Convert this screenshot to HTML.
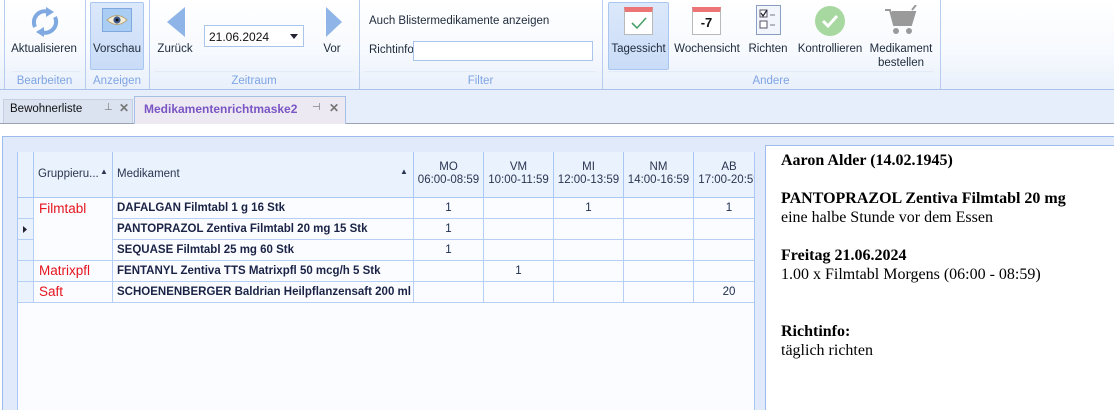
<!DOCTYPE html>
<html><head><meta charset="utf-8"><style>
*{margin:0;padding:0;box-sizing:border-box}
body{width:1114px;height:410px;overflow:hidden;position:relative;font-family:"Liberation Sans",sans-serif;font-size:11.5px;color:#1e2a3a;background:#fff}
.a{position:absolute}
.rib{left:0;top:0;width:1114px;height:90px;background:linear-gradient(#ffffff,#f6f9fe 60%,#e9f0fb);border-bottom:1px solid #a9c3ea}
.sep{top:0;width:1px;height:89px;background:#b8cdee}
.glab{top:75px;color:#7ea4e4;font-size:11.5px;text-align:center}
.gline{top:71px;height:1px;background:#e2ebf8}
.lbl{font-size:11.5px;color:#1e2a3a;text-align:center;white-space:nowrap}
.cell{position:absolute;border-right:1px solid #b5cff5;border-bottom:1px solid #b5cff5;height:22px;white-space:nowrap;overflow:hidden}
.hd{position:absolute;top:152px;height:46px;background:#eaf2fd;border-right:1px solid #a9c8f3;border-bottom:1px solid #a9c8f3;font-size:11.5px;color:#2a3550;white-space:nowrap}
.num{text-align:center;font-size:11.5px;line-height:21px;color:#1a2b4c}
.med{font-weight:bold;font-size:11.5px;line-height:20px;padding-left:4px;color:#1a2346}
.grp{color:#e5141e;font-size:13.5px;padding-left:5px;line-height:22px}
.rt{font-family:"Liberation Serif",serif;font-size:16px;color:#000;left:781px}
</style></head><body>
<div class="a rib"></div>
<div class="a sep" style="left:4px"></div>
<div class="a sep" style="left:85px"></div>
<div class="a sep" style="left:149px"></div>
<div class="a sep" style="left:359px"></div>
<div class="a sep" style="left:602px"></div>
<div class="a sep" style="left:940px"></div>
<div class="a gline" style="left:12px;width:68px"></div>
<div class="a gline" style="left:155px;width:198px"></div>
<div class="a gline" style="left:364px;width:232px"></div>
<div class="a gline" style="left:608px;width:325px"></div>
<svg class="a" style="left:27px;top:5px" width="36" height="34" viewBox="0 0 36 34"><path d="M8 22 A11 11 0 0 1 22 7" fill="none" stroke="#7fa9e0" stroke-width="4"/><path d="M19 2 L27 7 L19 12Z" fill="#7fa9e0"/><path d="M28 12 A11 11 0 0 1 14 27" fill="none" stroke="#7fa9e0" stroke-width="4"/><path d="M17 32 L9 27 L17 22Z" fill="#7fa9e0"/></svg>
<div class="a lbl" style="left:8px;top:43px;width:72px">Aktualisieren</div>
<div class="a glab" style="left:4px;width:81px">Bearbeiten</div>
<div class="a" style="left:90px;top:2px;width:54px;height:68px;background:linear-gradient(#dce8fb,#c9dcf7);border:1px solid #a8c6ef;border-radius:2px"></div>
<div class="a" style="left:102px;top:8px;width:30px;height:24px;background:#a9cdf3;border:1px solid #7fa9dc"></div>
<svg class="a" style="left:105px;top:12px" width="24" height="16" viewBox="0 0 24 16"><path d="M2 8 Q12 -1 22 8 Q12 17 2 8Z" fill="#f4eed9" stroke="#b7a67a"/><circle cx="12" cy="8" r="3.6" fill="#3d5a8a"/><circle cx="12" cy="8" r="1.4" fill="#111"/></svg>
<div class="a lbl" style="left:90px;top:43px;width:54px">Vorschau</div>
<div class="a glab" style="left:85px;width:64px">Anzeigen</div>
<svg class="a" style="left:166px;top:6px" width="20" height="32"><path d="M19 1 L1 16 L19 31Z" fill="#8fb5e8"/></svg>
<div class="a lbl" style="left:156px;top:43px;width:38px">Zurück</div>
<div class="a" style="left:204px;top:25px;width:100px;height:22px;background:#fff;border:1px solid #aac5ec"></div>
<div class="a" style="left:209px;top:30px;font-size:12px;color:#111">21.06.2024</div>
<svg class="a" style="left:290px;top:34px" width="8" height="5"><path d="M0 0H8L4 5Z" fill="#223"/></svg>
<svg class="a" style="left:325px;top:6px" width="18" height="32"><path d="M1 1 L17 16 L1 31Z" fill="#8fb5e8"/></svg>
<div class="a lbl" style="left:320px;top:43px;width:24px">Vor</div>
<div class="a glab" style="left:149px;width:210px">Zeitraum</div>
<div class="a" style="left:369px;top:15px">Auch Blistermedikamente anzeigen</div>
<div class="a" style="left:369px;top:44px">Richtinfo</div>
<div class="a" style="left:413px;top:41px;width:180px;height:20px;background:#fff;border:1px solid #aac5ec"></div>
<div class="a glab" style="left:359px;width:243px">Filter</div>
<div class="a" style="left:608px;top:2px;width:61px;height:68px;background:linear-gradient(#dce8fb,#c9dcf7);border:1px solid #a8c6ef;border-radius:2px"></div>
<div class="a" style="left:624px;top:7px;width:29px;height:28px;background:#fff;border:1px solid #b9b9b9;border-top:5px solid #ec7474"></div>
<svg class="a" style="left:630px;top:16px" width="18" height="14"><path d="M2 7 L7 12 L16 2" fill="none" stroke="#4aa06a" stroke-width="1.6"/></svg>
<div class="a lbl" style="left:608px;top:43px;width:61px">Tagessicht</div>
<div class="a" style="left:692px;top:7px;width:29px;height:28px;background:#fff;border:1px solid #b9b9b9;border-top:5px solid #ec7474;font-weight:bold;font-size:13px;text-align:center;line-height:21px;color:#111">-7</div>
<div class="a lbl" style="left:674px;top:43px;width:66px">Wochensicht</div>
<div class="a" style="left:756px;top:5px;width:25px;height:30px;background:#f2f5fb;border:1px solid #8a9ec2"></div>
<svg class="a" style="left:759px;top:9px" width="20" height="22"><rect x="1" y="1" width="7" height="7" fill="#fff" stroke="#556"/><path d="M2 4 L4 7 L8 1" fill="none" stroke="#223" stroke-width="1.2"/><path d="M11 6H16M11 16H16" stroke="#778"/><rect x="1" y="12" width="7" height="7" fill="#fff" stroke="#556"/></svg>
<div class="a lbl" style="left:748px;top:43px;width:40px">Richten</div>
<svg class="a" style="left:814px;top:5px" width="32" height="32"><circle cx="16" cy="16" r="15" fill="#a7d8a0"/><path d="M9 16 L14 21 L23 11" fill="none" stroke="#fff" stroke-width="3"/></svg>
<div class="a lbl" style="left:797px;top:43px;width:66px">Kontrollieren</div>
<svg class="a" style="left:884px;top:5px" width="34" height="30"><path d="M1 5H6L10 20H27L31 7H8" fill="#9a9a9a" stroke="#9a9a9a" stroke-width="2"/><path d="M28 5L32 0" stroke="#9a9a9a" stroke-width="2"/><circle cx="12" cy="26" r="3" fill="#9a9a9a"/><circle cx="25" cy="26" r="3" fill="#9a9a9a"/></svg>
<div class="a lbl" style="left:866px;top:42px;width:70px;line-height:14px">Medikament<br>bestellen</div>
<div class="a glab" style="left:602px;width:338px">Andere</div>
<div class="a" style="left:0;top:90px;width:1114px;height:34px;background:#e7eefb"></div>
<div class="a" style="left:0;top:123px;width:1114px;height:1px;background:#9aa3b3"></div>
<div class="a" style="left:3px;top:99px;width:130px;height:24px;background:#dbe3f1;border:1px solid #c5d0e2;border-bottom:none"></div>
<div class="a" style="left:10px;top:103px;color:#111">Bewohnerliste</div>
<div class="a" style="left:104px;top:102px;font-size:10px;color:#777">⊥</div>
<div class="a" style="left:119px;top:101px;font-size:12px;color:#777;font-weight:bold">✕</div>
<div class="a" style="left:134px;top:96px;width:212px;height:28px;background:#ede9f2;border:1px solid #a9c0e6;border-bottom:none"></div>
<div class="a" style="left:144px;top:102px;font-size:12px;color:#7a55c4;font-weight:bold">Medikamentenrichtmaske2</div>
<div class="a" style="left:312px;top:102px;font-size:10px;color:#777">⊣</div>
<div class="a" style="left:329px;top:101px;font-size:12px;color:#777;font-weight:bold">✕</div>
<div class="a" style="left:2px;top:136px;width:1112px;height:274px;background:#e0eafb;border-top:1px solid #9cbcf0;border-left:1px solid #9cbcf0"></div>
<div class="a" style="left:17px;top:152px;width:738px;height:258px;background:#fbfcff;border-left:1px solid #a9c8f3;border-top:1px solid #a9c8f3"></div>
<div class="a" style="left:754px;top:152px;width:1px;height:258px;background:#a9c8f3"></div>
<div class="hd" style="left:18px;width:16px"></div>
<div class="hd" style="left:34px;width:79px"><span class="a" style="left:4px;top:16px">Gruppieru...</span><span class="a" style="left:66px;top:15px;font-size:8px">▲</span></div>
<div class="hd" style="left:113px;width:301px"><span class="a" style="left:4px;top:16px">Medikament</span><span class="a" style="left:287px;top:15px;font-size:8px">▲</span></div>
<div class="hd" style="left:414px;width:70px;text-align:center;padding-top:9px;line-height:13px">MO<br>06:00-08:59</div>
<div class="hd" style="left:484px;width:70px;text-align:center;padding-top:9px;line-height:13px">VM<br>10:00-11:59</div>
<div class="hd" style="left:554px;width:70px;text-align:center;padding-top:9px;line-height:13px">MI<br>12:00-13:59</div>
<div class="hd" style="left:624px;width:70px;text-align:center;padding-top:9px;line-height:13px">NM<br>14:00-16:59</div>
<div class="hd" style="left:694px;width:60px;padding-top:9px;line-height:13px;overflow:hidden;border-right:none"><div style="text-align:center;width:70px">AB<br>17:00-20:59</div></div>
<div class="cell" style="left:18px;top:198px;width:16px;height:21px;background:#eaf2fd"></div>
<div class="cell" style="left:18px;top:219px;width:16px;height:21px;background:#eaf2fd"><svg class="a" style="left:5px;top:7px" width="4" height="7"><path d="M0 0L4 3.5L0 7Z" fill="#223"/></svg></div>
<div class="cell" style="left:18px;top:240px;width:16px;height:21px;background:#eaf2fd"></div>
<div class="cell" style="left:18px;top:261px;width:16px;height:21px;background:#eaf2fd"></div>
<div class="cell" style="left:18px;top:282px;width:16px;height:21px;background:#eaf2fd"></div>
<div class="cell grp" style="left:34px;top:198px;width:79px;height:63px">Filmtabl</div>
<div class="cell grp" style="left:34px;top:261px;width:79px;height:21px;line-height:20px">Matrixpfl</div>
<div class="cell grp" style="left:34px;top:282px;width:79px;height:21px;line-height:20px">Saft</div>
<div class="cell med" style="left:113px;top:198px;width:301px;height:21px">DAFALGAN Filmtabl 1 g 16 Stk</div>
<div class="cell med" style="left:113px;top:219px;width:301px;height:21px">PANTOPRAZOL Zentiva Filmtabl 20 mg 15 Stk</div>
<div class="cell med" style="left:113px;top:240px;width:301px;height:21px">SEQUASE Filmtabl 25 mg 60 Stk</div>
<div class="cell med" style="left:113px;top:261px;width:301px;height:21px">FENTANYL Zentiva TTS Matrixpfl 50 mcg/h 5 Stk</div>
<div class="cell med" style="left:113px;top:282px;width:301px;height:21px">SCHOENENBERGER Baldrian Heilpflanzensaft 200 ml</div>
<div class="cell num" style="left:414px;top:198px;width:70px;height:21px">1</div>
<div class="cell num" style="left:484px;top:198px;width:70px;height:21px"></div>
<div class="cell num" style="left:554px;top:198px;width:70px;height:21px">1</div>
<div class="cell num" style="left:624px;top:198px;width:70px;height:21px"></div>
<div class="cell num" style="left:694px;top:198px;width:60px;height:21px;border-right:none;padding-left:10px">1</div>
<div class="cell num" style="left:414px;top:219px;width:70px;height:21px">1</div>
<div class="cell num" style="left:484px;top:219px;width:70px;height:21px"></div>
<div class="cell num" style="left:554px;top:219px;width:70px;height:21px"></div>
<div class="cell num" style="left:624px;top:219px;width:70px;height:21px"></div>
<div class="cell num" style="left:694px;top:219px;width:60px;height:21px;border-right:none"></div>
<div class="cell num" style="left:414px;top:240px;width:70px;height:21px">1</div>
<div class="cell num" style="left:484px;top:240px;width:70px;height:21px"></div>
<div class="cell num" style="left:554px;top:240px;width:70px;height:21px"></div>
<div class="cell num" style="left:624px;top:240px;width:70px;height:21px"></div>
<div class="cell num" style="left:694px;top:240px;width:60px;height:21px;border-right:none"></div>
<div class="cell num" style="left:414px;top:261px;width:70px;height:21px"></div>
<div class="cell num" style="left:484px;top:261px;width:70px;height:21px">1</div>
<div class="cell num" style="left:554px;top:261px;width:70px;height:21px"></div>
<div class="cell num" style="left:624px;top:261px;width:70px;height:21px"></div>
<div class="cell num" style="left:694px;top:261px;width:60px;height:21px;border-right:none"></div>
<div class="cell num" style="left:414px;top:282px;width:70px;height:21px"></div>
<div class="cell num" style="left:484px;top:282px;width:70px;height:21px"></div>
<div class="cell num" style="left:554px;top:282px;width:70px;height:21px"></div>
<div class="cell num" style="left:624px;top:282px;width:70px;height:21px"></div>
<div class="cell num" style="left:694px;top:282px;width:60px;height:21px;border-right:none;padding-left:10px">20</div>
<div class="a" style="left:765px;top:145px;width:349px;height:265px;background:#fff;border-left:1px solid #9cbcf0;border-top:1px solid #9cbcf0"></div>
<div class="a rt" style="top:152px;font-weight:bold">Aaron Alder (14.02.1945)</div>
<div class="a rt" style="top:190px;font-weight:bold">PANTOPRAZOL Zentiva Filmtabl 20 mg</div>
<div class="a rt" style="top:209px">eine halbe Stunde vor dem Essen</div>
<div class="a rt" style="top:247px;font-weight:bold">Freitag 21.06.2024</div>
<div class="a rt" style="top:266px">1.00 x Filmtabl Morgens (06:00 - 08:59)</div>
<div class="a rt" style="top:323px;font-weight:bold">Richtinfo:</div>
<div class="a rt" style="top:342px">täglich richten</div>
</body></html>
